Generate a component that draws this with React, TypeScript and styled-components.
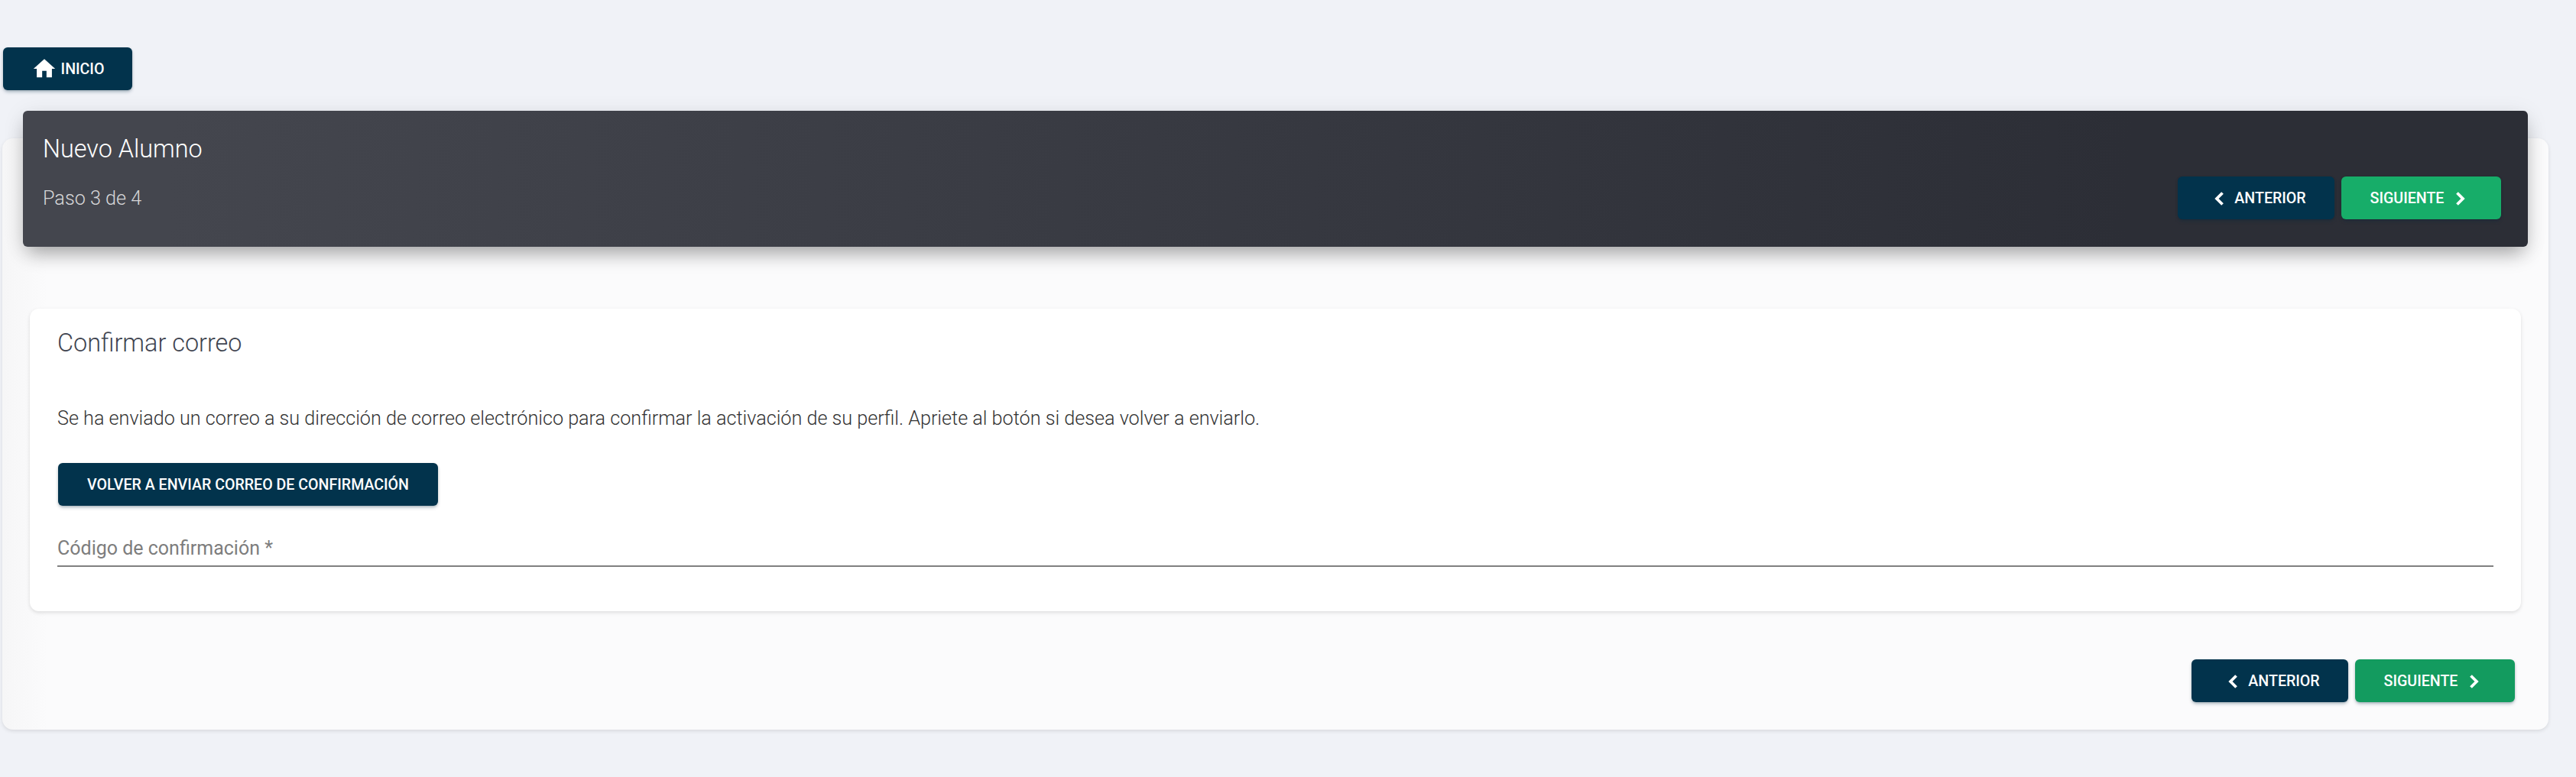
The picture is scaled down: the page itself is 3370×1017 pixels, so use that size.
import React from "react";
import styled, { createGlobalStyle } from "styled-components";

const Global = createGlobalStyle`
  html, body { margin: 0; padding: 0; background: #f0f2f7; }
  body { font-family: Roboto, "Liberation Sans", sans-serif; }
  * { box-sizing: border-box; }
`;

const Page = styled.div`
  width: 3370px;
  height: 1017px;
  padding: 62px 36px 0 3px;
  overflow: hidden;
`;

const Btn = styled.button<{ $tone?: "navy" | "green" | "deep" }>`
  display: inline-flex;
  align-items: center;
  justify-content: center;
  height: 56px;
  padding: 0 38px;
  border: 0;
  border-radius: 6px;
  font-family: Roboto, sans-serif;
  font-size: 19.6px;
  font-weight: 500;
  color: #fff;
  white-space: nowrap;
  background: ${(p) => (p.$tone === "green" ? "#17ad69" : p.$tone === "deep" ? "#139b5f" : "#02334c")};
  box-shadow: 0 3px 5px -1px rgba(2, 51, 76, 0.3), 0 1px 3px rgba(0, 0, 0, 0.14);
`;

const HomeBar = styled.div`
  display: flex;
  padding-left: 1px;
`;

const HomeBtn = styled(Btn)`
  width: 169px;
  gap: 5px;
  padding: 0;
`;

const Card = styled.section`
  margin-top: 63px;
  background: linear-gradient(90deg, #f6f6f7 0, #fbfbfc 60px);
  background-color: #fbfbfc;
  border-radius: 14px;
  height: 774px;
  padding: 0 36px;
  box-shadow: 0 2px 5px rgba(0, 0, 0, 0.1);
`;

const Header = styled.header`
  position: relative;
  top: -36px;
  margin: 0 -9px -36px;
  height: 178px;
  padding: 30px 35px 36px 26px;
  border-radius: 6px;
  display: flex;
  justify-content: space-between;
  align-items: flex-end;
  background: linear-gradient(93deg, #44464e 6%, #2c2e36 84%);
  box-shadow: 0 14px 24px -6px rgba(0, 0, 0, 0.32), 0 4px 30px rgba(0, 0, 0, 0.08);
`;

const HeaderText = styled.div`
  align-self: flex-start;
  display: flex;
  flex-direction: column;
`;

const Title = styled.h1`
  margin: 0;
  font-size: 32.4px;
  line-height: 40px;
  font-weight: 300;
  color: #fff;
`;

const Step = styled.p`
  margin: 30px 0 0;
  font-size: 25.2px;
  line-height: 30px;
  font-weight: 300;
  color: #d6d6d8;
`;

const Actions = styled.div`
  display: flex;
  gap: 9px;
`;

const NavBtn = styled(Btn)<{ $w: number }>`
  width: ${(p) => p.$w}px;
  padding: 0;
  gap: 4px;
`;

const Panel = styled.div`
  margin-top: 81px;
  height: 396px;
  padding: 24px 36px 0;
  background: #fff;
  border-radius: 12px;
  box-shadow: 0 2px 5px rgba(0, 0, 0, 0.12);
`;

const PanelTitle = styled.h2`
  margin: 0;
  font-size: 32.4px;
  line-height: 42px;
  font-weight: 300;
  color: #3f4450;
`;

const Para = styled.p`
  margin: 62px 0 0;
  font-size: 25.2px;
  line-height: 32px;
  font-weight: 300;
  color: #333;
`;

const ResendWrap = styled.div`
  display: flex;
  margin-top: 42px;
  padding-left: 1px;
`;

const Field = styled.div`
  margin-top: 36px;
  height: 44px;
  border-bottom: 2px solid #808080;
  font-size: 25px;
  line-height: 40px;
  color: #7d7d7d;
`;

const Footer = styled.div`
  margin-top: 63px;
  margin-right: 8px;
  display: flex;
  justify-content: flex-end;
  gap: 9px;
`;

const HomeIcon = () => (
  <svg width="34" height="34" viewBox="0 0 24 24" fill="#fff" aria-hidden="true">
    <path d="M10 20v-6h4v6h5v-8h3L12 3 2 12h3v8z" />
  </svg>
);

const Chevron = ({ dir }: { dir: "l" | "r" }) => (
  <svg width="33" height="33" viewBox="0 0 33 33" fill="none" stroke="#fff" strokeWidth="3.8" aria-hidden="true">
    <path d={dir === "l" ? "M21.5 9.5l-7.5 7.5 7.5 7.5" : "M13.5 9.5l7.5 7.5-7.5 7.5"} />
  </svg>
);

const Nav = ({ next }: { next: "green" | "deep" }) => (
  <>
    <NavBtn $w={205}>
      <Chevron dir="l" />
      ANTERIOR
    </NavBtn>
    <NavBtn $w={209} $tone={next}>
      SIGUIENTE
      <Chevron dir="r" />
    </NavBtn>
  </>
);

export default function App() {
  return (
    <Page>
      <Global />
      <HomeBar>
        <HomeBtn>
          <HomeIcon />
          INICIO
        </HomeBtn>
      </HomeBar>
      <Card>
        <Header>
          <HeaderText>
            <Title>Nuevo Alumno</Title>
            <Step>Paso 3 de 4</Step>
          </HeaderText>
          <Actions>
            <Nav next="green" />
          </Actions>
        </Header>
        <Panel>
          <PanelTitle>Confirmar correo</PanelTitle>
          <Para>
            Se ha enviado un correo a su dirección de correo electrónico para confirmar la activación de su perfil.
            Apriete al botón si desea volver a enviarlo.
          </Para>
          <ResendWrap>
            <Btn>VOLVER A ENVIAR CORREO DE CONFIRMACIÓN</Btn>
          </ResendWrap>
          <Field>Código de confirmación *</Field>
        </Panel>
        <Footer>
          <Nav next="deep" />
        </Footer>
      </Card>
    </Page>
  );
}
